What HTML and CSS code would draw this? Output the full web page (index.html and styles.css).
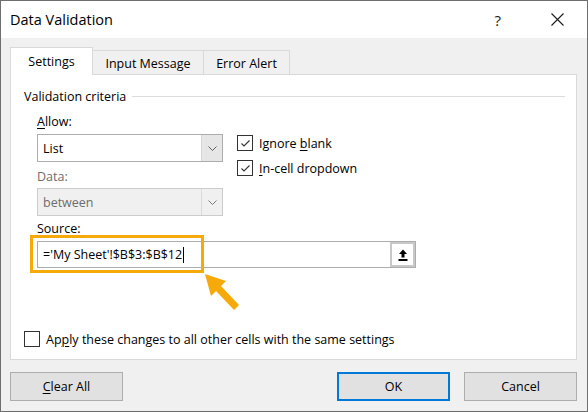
FILE: index.html
```html
<!DOCTYPE html>
<html lang="en">
<head>
    <meta charset="UTF-8">
    <meta name="viewport" content="width=device-width, initial-scale=1.0">
    <title>Data Validation</title>
    <link rel="stylesheet" href="styles.css">
</head>
<body>
    <div class="window">
        <div class="titlebar">
            <span class="title">Data Validation</span>
            <span class="help">?</span>
            <svg class="close" width="13" height="13" viewBox="0 0 13 13">
                <path d="M0.5 0.5 L12.5 12.5 M12.5 0.5 L0.5 12.5" stroke="#1a1a1a" stroke-width="1.1" fill="none"/>
            </svg>
        </div>

        <div class="dialog">
            <div class="tabs">
                <div class="tab active">Settings</div>
                <div class="tab">Input Message</div>
                <div class="tab">Error Alert</div>
            </div>

            <div class="panel">
                <div class="legend">
                    <span>Validation criteria</span>
                    <div class="legend-line"></div>
                </div>

                <div class="criteria">
                    <div class="criteria-left">
                        <div class="label label-allow"><u>A</u>llow:</div>
                        <div class="select">
                            <span class="select-value">List</span>
                            <span class="select-btn">
                                <svg width="9" height="5" viewBox="0 0 9 5"><path d="M0.5 0.5 L4.5 4.5 L8.5 0.5" stroke="#606060" fill="none"/></svg>
                            </span>
                        </div>
                        <div class="label label-data disabled">Data:</div>
                        <div class="select disabled">
                            <span class="select-value">between</span>
                            <span class="select-btn">
                                <svg width="9" height="5" viewBox="0 0 9 5"><path d="M0.5 0.5 L4.5 4.5 L8.5 0.5" stroke="#7a7a7a" fill="none"/></svg>
                            </span>
                        </div>
                    </div>
                    <div class="criteria-right">
                        <label class="check">
                            <span class="box checked"><svg width="13" height="13" viewBox="0 0 13 13"><path d="M2.5 6.5 L5 9 L10.5 3.5" stroke="#333" stroke-width="1.1" fill="none"/></svg></span>
                            <span>Ignore <u>b</u>lank</span>
                        </label>
                        <label class="check">
                            <span class="box checked"><svg width="13" height="13" viewBox="0 0 13 13"><path d="M2.5 6.5 L5 9 L10.5 3.5" stroke="#333" stroke-width="1.1" fill="none"/></svg></span>
                            <span><u>I</u>n-cell dropdown</span>
                        </label>
                    </div>
                </div>

                <div class="label label-source">Source:</div>
                <div class="source">
                    <span class="source-text">='My Sheet'!$B$3:$B$12<span class="caret"></span></span>
                    <span class="collapse-btn">
                        <svg width="14" height="14" viewBox="0 0 14 14">
                            <path d="M7 1.5 L11 6 L8.5 6 L8.5 9.5 L5.5 9.5 L5.5 6 L3 6 Z" fill="#000"/>
                            <rect x="2.5" y="11" width="9" height="2" fill="#000"/>
                        </svg>
                    </span>
                    <div class="highlight"></div>
                    <svg class="pointer" width="40" height="42" viewBox="0 0 40 42">
                        <path d="M0 0 L6 22 L11 17 L29 36 L34 31 L16 12 L21 7 Z" fill="#f6aa0a"/>
                    </svg>
                </div>

                <label class="check apply">
                    <span class="box"></span>
                    <span>Ap<u>p</u>ly these changes to all other cells with the same settings</span>
                </label>
            </div>

            <div class="buttons">
                <button class="btn"><u>C</u>lear All</button>
                <div class="spacer"></div>
                <button class="btn default">OK</button>
                <button class="btn">Cancel</button>
            </div>
        </div>
    </div>
</body>
</html>
```

FILE: styles.css
```css
* {
    box-sizing: border-box;
}
body {
    margin: 0;
    font-family: "Open Sans", "Noto Sans", sans-serif;
    font-size: 12.5px;
    color: #000;
}
u {
    text-decoration-thickness: 1px;
    text-underline-offset: 2px;
}
.window {
    width: 588px;
    height: 412px;
    border: 1px solid #6e6e6e;
    background: #f0f0f0;
    display: flex;
    flex-direction: column;
}
.titlebar {
    height: 37px;
    background: #fff;
    display: flex;
    align-items: center;
    padding-left: 9px;
}
.title {
    font-size: 14.5px;
    flex: 1;
}
.help {
    font-size: 15px;
    margin-right: 50px;
    color: #1a1a1a;
}
.close {
    margin-right: 23px;
}
.dialog {
    flex: 1;
    padding: 9px 10px 0 9px;
    display: flex;
    flex-direction: column;
}

/* tab strip */
.tabs {
    display: flex;
    align-items: flex-end;
    height: 27px;
    position: relative;
    z-index: 1;
}
.tab {
    height: 24px;
    padding-top: 3px;
    border: 1px solid #d9d9d9;
    border-bottom: none;
    border-left: none;
    background: #f0f0f0;
    display: flex;
    align-items: center;
    justify-content: center;
    line-height: 1;
}
.tab.active {
    height: 28px;
    padding-top: 2px;
    margin-bottom: -1px;
    background: #fff;
    border-left: 1px solid #d9d9d9;
    width: 83px;
}
.tab:nth-child(2) {
    width: 111px;
}
.tab:nth-child(3) {
    width: 86px;
}

.panel {
    height: 286px;
    background: #fff;
    border: 1px solid #d9d9d9;
    padding: 13px 0 0 13px;
}
.legend {
    display: flex;
    align-items: center;
    height: 16px;
    margin-right: 11px;
}
.legend-line {
    flex: 1;
    height: 1px;
    background: #dcdcdc;
    margin-left: 6px;
    margin-top: 1px;
}

.criteria {
    display: flex;
    padding-left: 13px;
}
.criteria-left {
    width: 186px;
}
.criteria-right {
    margin-left: 14px;
    padding-top: 31px;
}
.label {
    height: 16px;
    line-height: 16px;
}
.label-allow {
    margin-top: 10px;
    margin-bottom: 4px;
}
.label-data {
    margin-top: 7px;
    margin-bottom: 3px;
}
.label.disabled {
    color: #6d6d6d;
}
.label-source {
    margin: 5px 0 4px 13px;
}

/* combo boxes */
.select {
    height: 28px;
    border: 1px solid #adadad;
    background: #fff;
    display: flex;
    align-items: center;
}
.select-value {
    flex: 1;
    padding-left: 5px;
}
.select-btn {
    width: 21px;
    height: 100%;
    background: #e6e6e6;
    border-left: 1px solid #d4d4d4;
    display: flex;
    align-items: center;
    justify-content: center;
}
.select.disabled {
    background: #f0f0f0;
    border-color: #cccccc;
    color: #6d6d6d;
}
.select.disabled .select-btn {
    background: #f0f0f0;
    border-left-color: #d9d9d9;
}

/* checkboxes */
.check {
    display: flex;
    align-items: center;
    height: 16px;
    margin-bottom: 9px;
}
.box {
    width: 16px;
    height: 16px;
    border: 1px solid #333;
    background: #fff;
    margin-right: 6px;
    display: flex;
    align-items: center;
    justify-content: center;
}

/* source reference box */
.source {
    position: relative;
    width: 379px;
    height: 27px;
    margin-left: 13px;
    border: 1px solid #adadad;
    display: flex;
    align-items: center;
}
.source-text {
    flex: 1;
    padding-left: 5px;
    display: flex;
    align-items: center;
}
.caret {
    display: inline-block;
    width: 1px;
    height: 16px;
    background: #000;
    margin-left: 1px;
}
.collapse-btn {
    width: 25px;
    height: 25px;
    border: 2px solid #c8c8c8;
    display: flex;
    align-items: center;
    justify-content: center;
    background: #fff;
}
.highlight {
    position: absolute;
    left: -8px;
    top: -7px;
    width: 174px;
    height: 38px;
    border: 3px solid #f6aa0a;
    pointer-events: none;
}
.pointer {
    position: absolute;
    left: 167px;
    top: 32px;
}

.check.apply {
    margin-top: 63px;
}

/* bottom buttons */
.buttons {
    display: flex;
    margin-top: 12px;
}
.spacer {
    flex: 1;
}
.btn {
    width: 113px;
    height: 29px;
    border: 1px solid #adadad;
    background: #e1e1e1;
    font-family: inherit;
    font-size: 12.5px;
    color: #000;
    padding: 0;
}
.btn.default {
    border: 2px solid #0078d7;
    margin-right: 14px;
}
```
